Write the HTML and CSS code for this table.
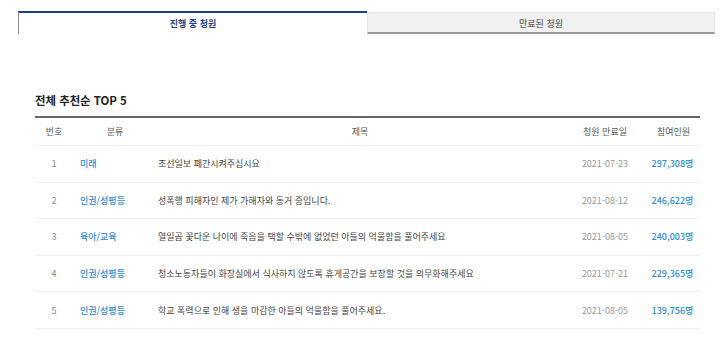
FILE: index.html
```html
<!DOCTYPE html>
<html lang="ko">
<head>
<meta charset="utf-8">
<link rel="stylesheet" href="styles.css">
</head>
<body>
<div class="tabs">
  <div class="tab active">진행 중 청원</div>
  <div class="tab">만료된 청원</div>
</div>
<section class="ranking">
  <h2 class="ranking-title">전체 추천순 TOP 5</h2>
  <table class="list">
    <colgroup>
      <col class="c-no"><col class="c-cat"><col class="c-title"><col class="c-date"><col class="c-count">
    </colgroup>
    <thead>
      <tr><th>번호</th><th>분류</th><th>제목</th><th>청원 만료일</th><th>참여인원</th></tr>
    </thead>
    <tbody>
      <tr><td class="no">1</td><td class="cat">미래</td><td class="subj">조선일보 폐간시켜주십시요</td><td class="date">2021-07-23</td><td class="count">297,308명</td></tr>
      <tr><td class="no">2</td><td class="cat">인권/성평등</td><td class="subj">성폭행 피해자인 제가 가해자와 동거 중입니다.</td><td class="date">2021-08-12</td><td class="count">246,622명</td></tr>
      <tr><td class="no">3</td><td class="cat">육아/교육</td><td class="subj">열일곱 꽃다운 나이에 죽음을 택할 수밖에 없었던 아들의 억울함을 풀어주세요</td><td class="date">2021-08-05</td><td class="count">240,003명</td></tr>
      <tr><td class="no">4</td><td class="cat">인권/성평등</td><td class="subj">청소노동자들이 화장실에서 식사하지 않도록 휴게공간을 보장할 것을 의무화해주세요</td><td class="date">2021-07-21</td><td class="count">229,365명</td></tr>
      <tr><td class="no">5</td><td class="cat">인권/성평등</td><td class="subj">학교 폭력으로 인해 생을 마감한 아들의 억울함을 풀어주세요.</td><td class="date">2021-08-05</td><td class="count">139,756명</td></tr>
    </tbody>
  </table>
</section>
</body>
</html>
```
FILE: styles.css
```css
html, body {
  margin: 0;
  padding: 0;
  background: #fff;
  font-family: "Noto Sans CJK KR", "Noto Sans", sans-serif;
  font-size: 9px;
  color: #333;
}
.tabs {
  display: flex;
  margin: 11px 0 0 18px;
  width: 697px;
}
.tab {
  box-sizing: border-box;
  height: 23px;
  line-height: 22px;
  text-align: center;
  font-size: 9px;
  font-weight: 700;
}
.tab.active {
  width: 349px;
  border-top: 2px solid #1f3f85;
  border-left: 1px solid #8a8a8a;
  color: #1f3f85;
}
.tab:not(.active) {
  width: 348px;
  margin-top: 1px;
  height: 22px;
  line-height: 21px;
  background: #f1f1f1;
  border: 1px solid #e2e2e2;
  border-bottom: 2px solid #9a9a9a;
  color: #666;
  font-weight: 500;
}
.ranking {
  margin: 56px 20px 0 35px;
}
.ranking-title {
  margin: 0 0 6px;
  font-size: 11.4px;
  line-height: 20px;
  font-weight: 700;
  color: #222;
}
.list {
  width: 665px;
  table-layout: fixed;
  border-collapse: collapse;
  border-top: 2px solid #666;
}
.c-no { width: 38px; }
.c-cat { width: 84px; }
.c-title { width: 406px; }
.c-date { width: 84px; }
.c-count { width: 53px; }
.list th {
  height: 27px;
  padding: 0;
  font-weight: 400;
  color: #555;
  text-align: center;
  border-bottom: 1px solid #f3f3f3;
}
.list td {
  height: 35.6px;
  padding: 0;
  border-bottom: 1px solid #f0f0f0;
  white-space: nowrap;
}
.list td.no {
  text-align: center;
  color: #888;
}
.list td.cat {
  padding-left: 7px;
  color: #2b8ad6;
  font-weight: 500;
}
.list td.subj {
  padding-left: 1px;
  color: #444;
}
.list td.date {
  text-align: center;
  color: #999;
}
.list td.count {
  text-align: center;
  color: #2b8ad6;
  font-weight: 500;
  padding-right: 2px;
}
```
